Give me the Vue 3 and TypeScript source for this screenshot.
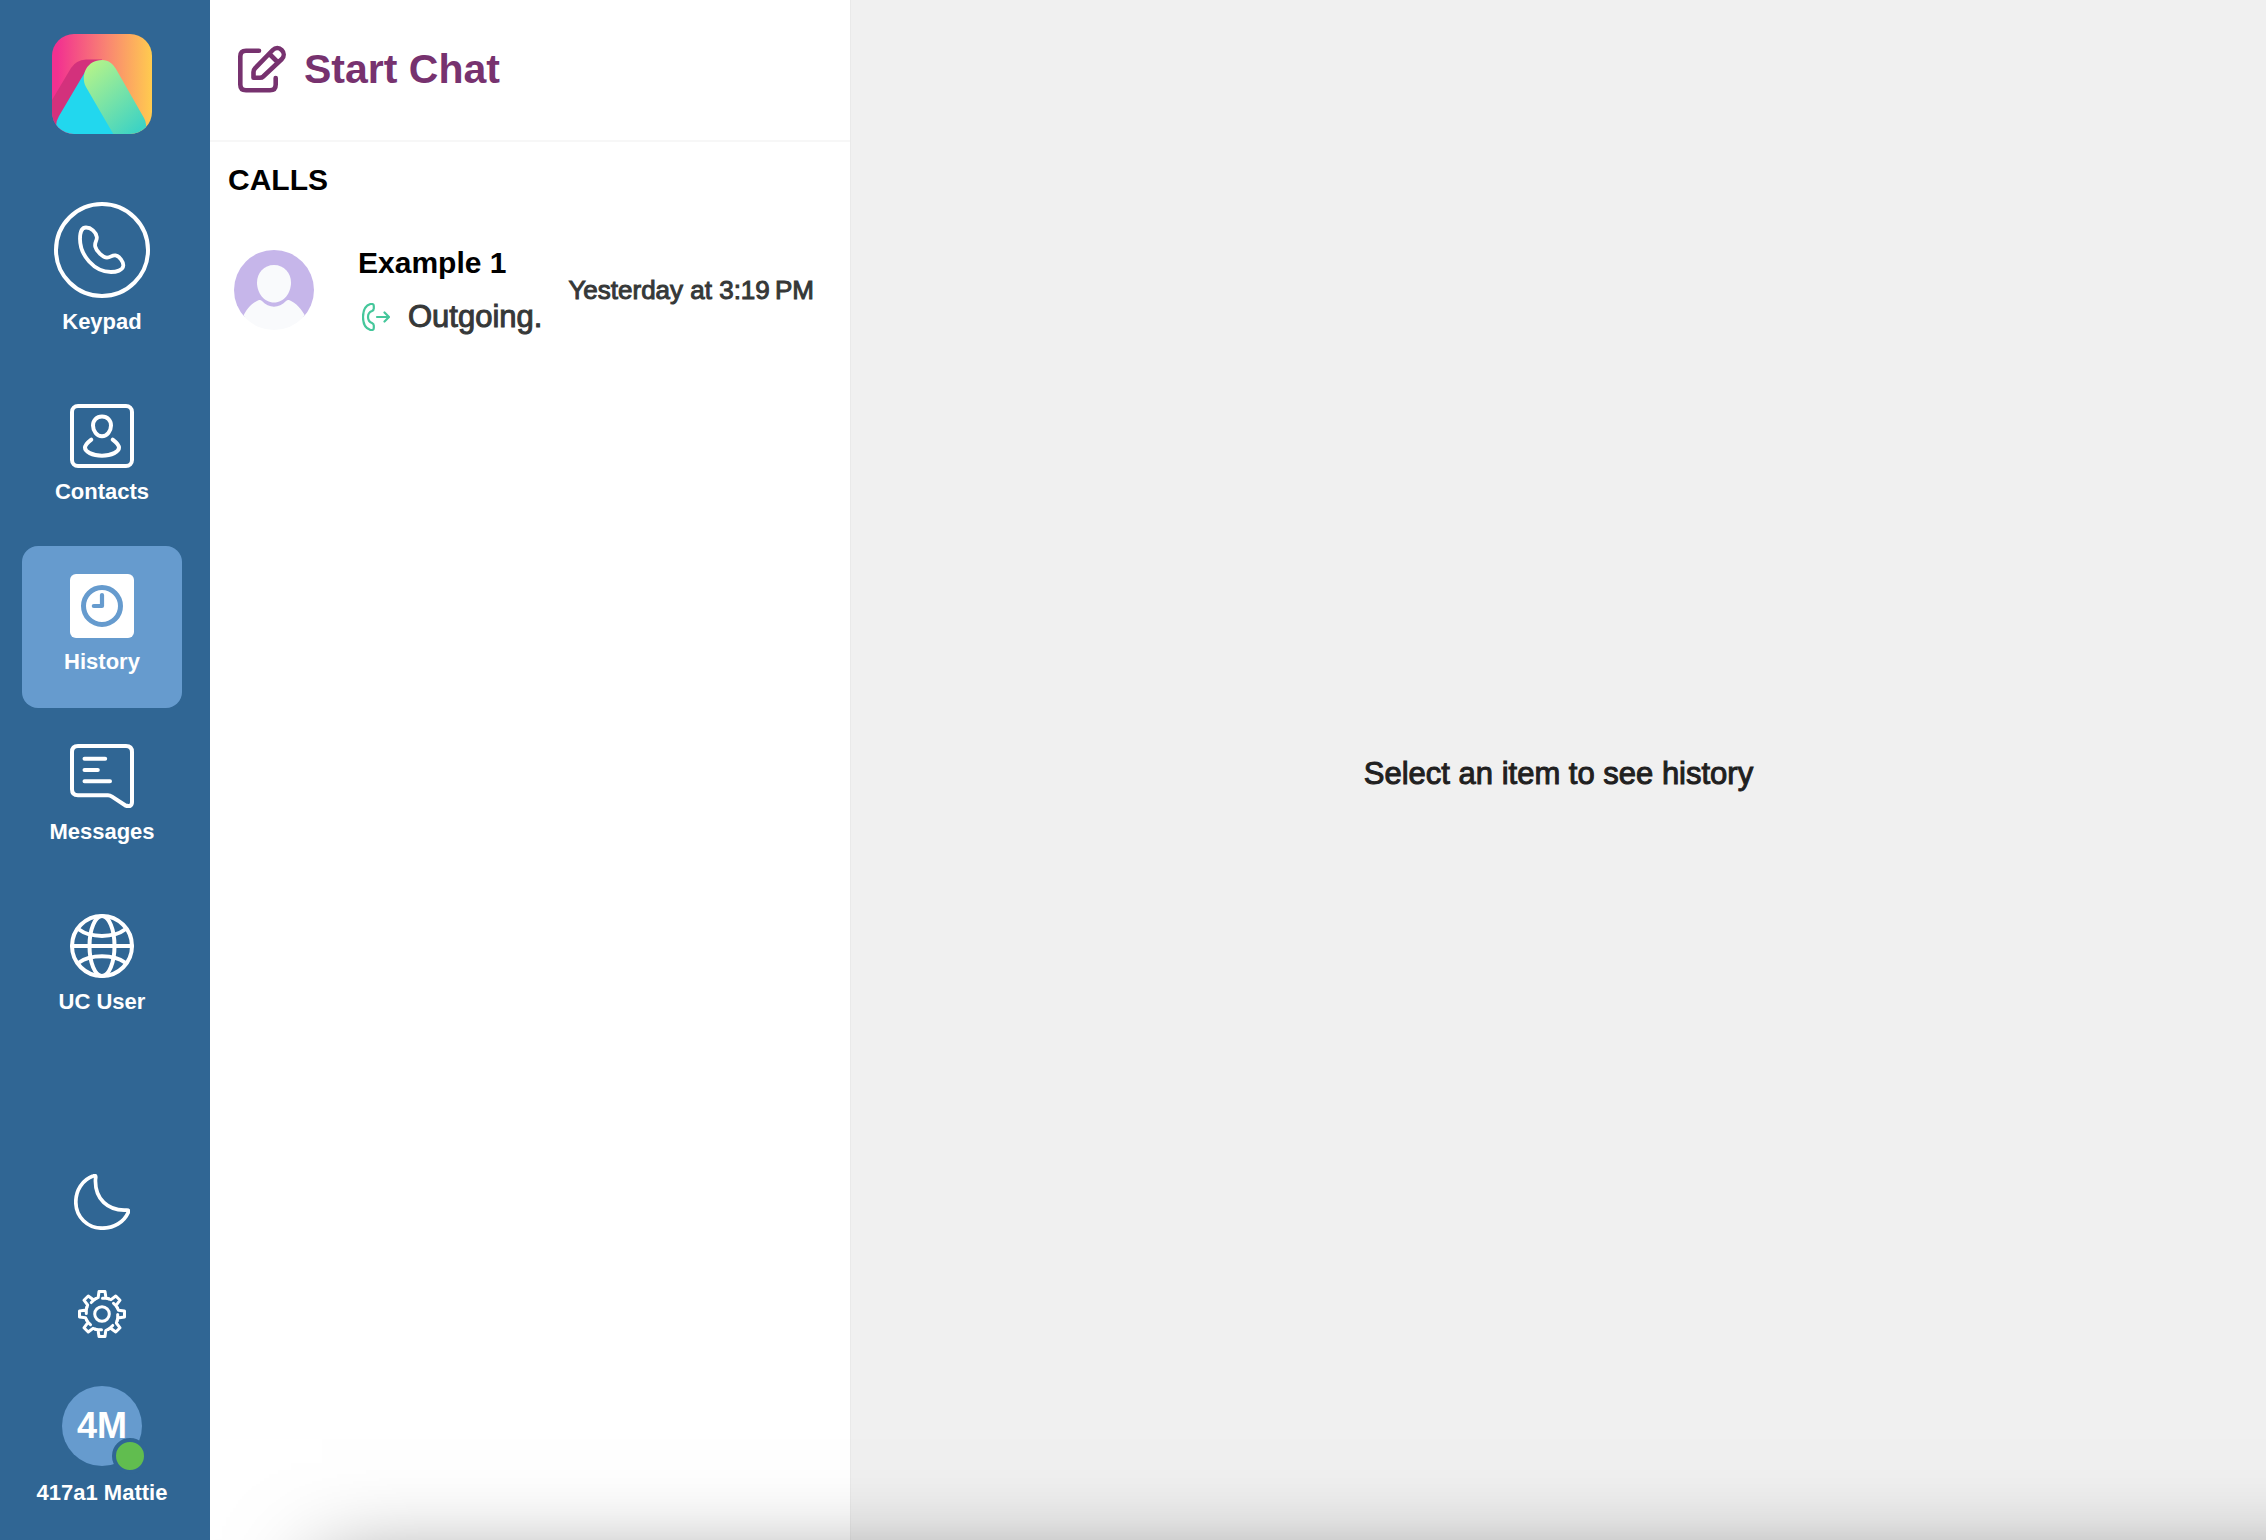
<script setup lang="ts">
import { ref } from 'vue'

type Section = 'keypad' | 'contacts' | 'history' | 'messages' | 'user'

interface NavItem {
  id: Section
  label: string
}

interface Call {
  id: number
  name: string
  direction: string
  time: string
}

const navItems: NavItem[] = [
  { id: 'keypad', label: 'Keypad' },
  { id: 'contacts', label: 'Contacts' },
  { id: 'history', label: 'History' },
  { id: 'messages', label: 'Messages' },
  { id: 'user', label: 'UC User' },
]

const calls: Call[] = [
  { id: 1, name: 'Example 1', direction: 'Outgoing.', time: 'Yesterday at 3:19\u202fPM' },
]

const active = ref<Section>('history')
const gearAngles = [0, 45, 90, 135, 180, 225, 270, 315]
</script>

<template>
  <div class="page">
    <aside class="sidebar">
      <svg class="logo" viewBox="0 0 100 100" aria-hidden="true">
        <defs>
          <linearGradient id="logo-back" x1="0" y1="0" x2="1" y2="0">
            <stop offset="0.05" stop-color="#f23190" />
            <stop offset="0.55" stop-color="#f98572" />
            <stop offset="1" stop-color="#ffcb4f" />
          </linearGradient>
          <linearGradient id="logo-front" x1="0.1" y1="0.05" x2="0.8" y2="1">
            <stop offset="0" stop-color="#b4f38a" />
            <stop offset="1" stop-color="#3dd3c4" />
          </linearGradient>
          <linearGradient id="logo-blue" x1="0.4" y1="0.6" x2="0.85" y2="0.35">
            <stop offset="0.6" stop-color="#22d7ee" />
            <stop offset="1" stop-color="#20c5f2" />
          </linearGradient>
          <clipPath id="logo-clip"><rect width="100" height="100" rx="22" /></clipPath>
        </defs>
        <g clip-path="url(#logo-clip)">
          <rect width="100" height="100" fill="url(#logo-back)" />
          <path d="M50 25.5H34Q24 26 19 34L0 66V100H40L52 40Z" fill="#d3317c" />
          <path d="M33 38L7 82Q4 87 4 92V100H62L40 40Z" fill="url(#logo-blue)" />
          <path d="M50 26C57 26 61 30 64 35L92 84Q95 89 94 100H61.3L34 53C28 41 35 26 50 26Z" fill="url(#logo-front)" />
        </g>
      </svg>

      <nav class="nav">
        <button
          v-for="item in navItems"
          :key="item.id"
          type="button"
          class="nav-item"
          :class="{ active: item.id === active }"
          @click="active = item.id"
        >
          <svg v-if="item.id === 'keypad'" class="icon-large" viewBox="0 0 96 96" aria-hidden="true">
            <circle cx="48" cy="48" r="46" stroke-width="4" />
            <path stroke-width="3.8" d="M26 37C26 30 28 25.5 32 25.5C37 25.5 42 30 42.8 35C43.3 38.5 40.4 40 41.2 44.5C42.3 49.5 49 55.6 53 55.6C57 55.6 57.5 53 61.5 53.4C65.5 54 69.5 60 69.3 63.5C69 68.5 62 70 57 70C40 70 26 53 26 37Z" />
          </svg>
          <svg v-else-if="item.id === 'contacts'" class="icon" viewBox="0 0 64 64" aria-hidden="true">
            <rect x="2" y="2" width="60" height="60" rx="6" stroke-width="4" />
            <path stroke-width="4" d="M32 12.5C37.5 12.5 41 16.5 41 21.5C41 27 37 32.3 32 32.3C27 32.3 23 27 23 21.5C23 16.5 26.5 12.5 32 12.5Z" />
            <path stroke-width="4" d="M21.3 35.6C17.5 38.5 15 41.5 15 43.8C15 47.5 22 51.7 32 51.7C42 51.7 49 47.5 49 43.8C49 41.5 46.5 38.5 42.7 35.6" />
          </svg>
          <svg v-else-if="item.id === 'history'" class="icon" viewBox="0 0 64 64" aria-hidden="true">
            <rect width="64" height="64" rx="6" fill="#fff" stroke="none" />
            <circle class="clock" cx="32" cy="32" r="18.5" stroke-width="5" />
            <path class="clock" stroke-width="4.2" d="M32 21V32H23.8" />
          </svg>
          <svg v-else-if="item.id === 'messages'" class="icon" viewBox="0 0 64 64" aria-hidden="true">
            <path stroke-width="4" d="M8 2H56Q62 2 62 8V58Q62 63.5 55.5 61.5L42 52.6Q40 51.3 38 51.3H8Q2 51.3 2 45.3V8Q2 2 8 2ZM14.5 14.7H35.2M14.5 26H27.8M14.5 37.3H40" />
          </svg>
          <svg v-else class="icon" viewBox="0 0 64 64" aria-hidden="true">
            <path stroke-width="4" d="M2 32H62M9 15.5C20 24 44 24 55 15.5M9 48.5C20 40 44 40 55 48.5" />
            <circle cx="32" cy="32" r="30" stroke-width="4" />
            <ellipse cx="32" cy="32" rx="12.5" ry="30" stroke-width="4" />
          </svg>
          <span class="label">{{ item.label }}</span>
        </button>
      </nav>

      <div class="tools">
        <button type="button" class="tool" aria-label="Dark mode">
          <svg class="moon" viewBox="0 0 56 56" aria-hidden="true">
            <path stroke-width="3.7" d="M19.5 1.8C8 6 1.8 16.5 1.8 28C1.8 43 13.5 54.2 28.3 54.2C40 54.2 50 48 54.2 38.5Q55.5 35.8 52.5 36C34 37 20.5 25 21.5 5Q22.5 .5 19.5 1.8Z" />
          </svg>
        </button>
        <button type="button" class="tool" aria-label="Settings">
          <svg class="gear" viewBox="0 0 48 48" aria-hidden="true">
            <circle cx="24" cy="24" r="7.3" stroke-width="3" />
            <path
              v-for="angle in gearAngles"
              :key="angle"
              stroke-width="3"
              :transform="`rotate(${angle} 24 24)`"
              d="M17.3 9L20.2 7.5L21 1.5H27L28 8.3L30.7 8.8M28 8.3H24.5"
            />
          </svg>
        </button>
        <button type="button" class="profile">
          <span class="initials">4M<span class="status"></span></span>
          <span class="label">417a1 Mattie</span>
        </button>
      </div>
    </aside>

    <section class="list">
      <header class="list-header">
        <button type="button" class="start-chat">
          <svg class="edit" viewBox="0 0 48 48" aria-hidden="true">
            <path d="M21 5.8H8Q2.3 5.8 2.3 11.5V39.5Q2.3 45.3 8 45.3H32Q37.7 45.3 37.7 39.5V33" />
            <path d="M15.5 32.8V27Q15.5 24.8 17 23.3L34.8 5A6.4 6.4 0 0 1 43.9 14L25.5 31.3Q24 32.8 21.8 32.8ZM31.5 9L39.5 17" />
          </svg>
          <span>Start Chat</span>
        </button>
      </header>
      <h2 class="heading">CALLS</h2>
      <ul class="calls">
        <li v-for="call in calls" :key="call.id">
          <button type="button" class="call">
            <svg class="avatar" viewBox="0 0 80 80" aria-hidden="true">
              <defs><clipPath id="avatar-clip"><circle cx="40" cy="40" r="40" /></clipPath></defs>
              <g clip-path="url(#avatar-clip)">
                <path fill="#c6b6ea" d="M0 0H80V67H0Z" />
                <path fill="#f9fafc" d="M40 15C50 15 57 23 57 32.5C57 43 50 52.5 40 52.5C30 52.5 23 43 23 32.5C23 23 30 15 40 15Z" />
                <path fill="#f9fafc" d="M9 67C12 59 18 53 25 50Q26.5 49.5 28 51C35 58.5 45 58.5 52 51Q53.5 49.5 55 50C62 53 68 59 71.5 67V80H9Z" />
              </g>
            </svg>
            <span class="call-text">
              <span class="call-name">{{ call.name }}</span>
              <span class="call-direction">
                <svg class="outgoing" viewBox="0 0 28 28" aria-hidden="true">
                  <path d="M8.5 1H10Q11.8 1 11.8 3V5.5Q11.8 7.2 10 8Q6 9.5 6 14Q6 18.5 10 20Q11.8 20.8 11.8 22.5V25Q11.8 27 10 27H8.5C3.5 25.5 1 20 1 14C1 8 3.5 2.5 8.5 1Z" />
                  <path d="M15 14H26.8M22.5 9.5L27 14L22.5 18.5" />
                </svg>
                <span>{{ call.direction }}</span>
              </span>
            </span>
            <time class="call-time">{{ call.time }}</time>
          </button>
        </li>
      </ul>
    </section>

    <main class="detail">
      <p>Select an item to see history</p>
    </main>

    <div class="edge-shadow"></div>
  </div>
</template>

<style>
body {
  margin: 0;
}
</style>

<style scoped>
.page {
  position: relative;
  display: flex;
  min-height: 100vh;
  overflow: hidden;
  background: #f0f0f0;
  font-family: "Liberation Sans", Arial, sans-serif;
}

button {
  display: flex;
  margin: 0;
  padding: 0;
  border: 0;
  background: none;
  color: inherit;
  font: inherit;
  text-align: left;
  cursor: pointer;
}

svg {
  display: block;
  flex: none;
  fill: none;
  stroke-linecap: round;
  stroke-linejoin: round;
}

.sidebar {
  position: relative;
  z-index: 1;
  display: flex;
  flex: none;
  flex-direction: column;
  box-sizing: border-box;
  width: 210px;
  padding: 34px 28px 32px 22px;
  background: #306694;
  color: #fff;
}

.sidebar svg {
  stroke: #fff;
}

.sidebar .logo {
  align-self: center;
  width: 100px;
  height: 100px;
  stroke: none;
}

.nav {
  display: flex;
  flex-direction: column;
  gap: 8px;
  margin-top: 40px;
}

.nav-item {
  flex-direction: column;
  align-items: center;
  gap: 9px;
  padding: 28px 0 31px;
  border-radius: 16px;
}

.nav-item.active {
  background: #669bce;
}

.icon-large {
  width: 96px;
  height: 96px;
}

.icon {
  width: 64px;
  height: 64px;
}

.sidebar .clock {
  stroke: #669bce;
}

.label {
  font-size: 22px;
  font-weight: 700;
  line-height: 30px;
  white-space: nowrap;
}

.tools {
  display: flex;
  flex-direction: column;
  align-items: center;
  margin-top: auto;
}

.tool {
  margin-bottom: 60px;
}

.tool + .tool {
  margin-bottom: 48px;
}

.moon {
  width: 56px;
  height: 56px;
}

.gear {
  width: 48px;
  height: 48px;
}

.profile {
  flex-direction: column;
  align-items: center;
  gap: 12px;
}

.initials {
  position: relative;
  width: 80px;
  height: 80px;
  border-radius: 50%;
  background: #669bce;
  font-size: 36px;
  font-weight: 700;
  line-height: 80px;
  text-align: center;
}

.status {
  position: absolute;
  right: -6px;
  bottom: -8px;
  width: 28px;
  height: 28px;
  border: 4px solid #306694;
  border-radius: 50%;
  background: #61bd4f;
}

.list {
  flex: none;
  width: 640px;
  background: #fff;
}

.list-header {
  display: flex;
  height: 96px;
  padding: 44px 28px 0;
  border-bottom: 2px solid #f7f7f7;
}

.start-chat {
  align-items: center;
  align-self: flex-start;
  gap: 18px;
  color: #77326f;
  font-size: 41px;
  font-weight: 700;
  line-height: 50px;
}

.edit {
  width: 48px;
  height: 48px;
  stroke: currentColor;
  stroke-width: 4.6;
}

.heading {
  margin: 20px 18px 0;
  color: #000;
  font-size: 30px;
  line-height: 36px;
}

.calls {
  margin: 47px 0 0;
  padding: 0;
  list-style: none;
}

.call {
  align-items: center;
  box-sizing: border-box;
  width: 100%;
  padding: 0 36px 0 24px;
}

.avatar {
  width: 80px;
  height: 80px;
}

.call-text {
  display: flex;
  flex-direction: column;
  gap: 18px;
  margin-left: 44px;
  line-height: 36px;
}

.call-name {
  color: #000;
  font-size: 30px;
  font-weight: 700;
}

.call-direction {
  display: flex;
  align-items: center;
  gap: 18px;
  padding-left: 4px;
  color: #363838;
  font-size: 31px;
  -webkit-text-stroke: 1px currentColor;
}

.outgoing {
  width: 28px;
  height: 28px;
  stroke: #45c79b;
  stroke-width: 2.2;
}

.call-time {
  margin-left: auto;
  color: #363838;
  font-size: 26px;
  line-height: 32px;
  white-space: nowrap;
  -webkit-text-stroke: 1px currentColor;
}

.detail {
  display: flex;
  flex: 1;
  align-items: center;
  justify-content: center;
  border-left: 1px solid #e9e9e9;
}

.detail p {
  margin: 8px 0 0;
  color: #1f2020;
  font-size: 31px;
  line-height: 36px;
  -webkit-text-stroke: 1px currentColor;
}

/* Soft shadow rising from below the lower edge of the window */
.edge-shadow {
  position: absolute;
  top: 100%;
  right: -200px;
  left: 322px;
  height: 300px;
  box-shadow: 0 30px 88px rgba(0, 0, 0, 0.5);
  pointer-events: none;
}
</style>
